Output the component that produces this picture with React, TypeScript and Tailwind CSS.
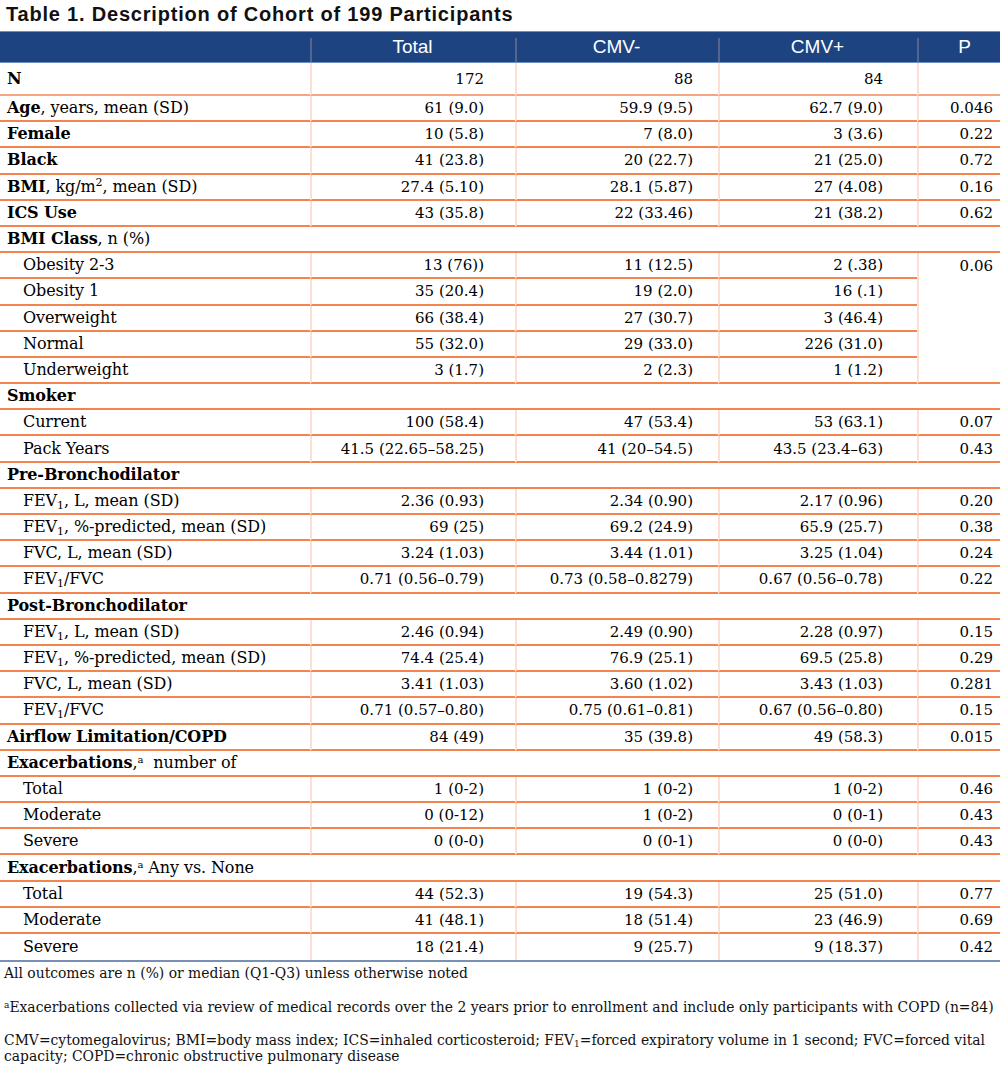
import React from "react";

type DataRow = {
  kind: "data";
  label: React.ReactNode;
  indent?: boolean;
  vals: [string, string, string];
  p?: string;
  pRowSpan?: number;
  skipP?: boolean;
  tall?: boolean;
  lightBorder?: boolean;
};
type SectionRow = { kind: "section"; label: React.ReactNode };
type Row = DataRow | SectionRow;

const Sub1 = () => <sub className="text-[11px]">1</sub>;
const SupA = () => <sup className="text-[10px]">a</sup>;

const rows: Row[] = [
  { kind: "data", label: <b>N</b>, vals: ["172", "88", "84"], p: "", tall: true, lightBorder: true },
  { kind: "data", label: <><b>Age</b>, years, mean (SD)</>, vals: ["61 (9.0)", "59.9 (9.5)", "62.7 (9.0)"], p: "0.046" },
  { kind: "data", label: <b>Female</b>, vals: ["10 (5.8)", "7 (8.0)", "3 (3.6)"], p: "0.22" },
  { kind: "data", label: <b>Black</b>, vals: ["41 (23.8)", "20 (22.7)", "21 (25.0)"], p: "0.72" },
  {
    kind: "data",
    label: <><b>BMI</b>, kg/m<sup className="text-[11px]">2</sup>, mean (SD)</>,
    vals: ["27.4 (5.10)", "28.1 (5.87)", "27 (4.08)"],
    p: "0.16",
  },
  { kind: "data", label: <b>ICS Use</b>, vals: ["43 (35.8)", "22 (33.46)", "21 (38.2)"], p: "0.62" },
  { kind: "section", label: <><b>BMI Class</b>, n (%)</> },
  { kind: "data", indent: true, label: "Obesity 2-3", vals: ["13 (76))", "11 (12.5)", "2 (.38)"], p: "0.06", pRowSpan: 5 },
  { kind: "data", indent: true, label: "Obesity 1", vals: ["35 (20.4)", "19 (2.0)", "16 (.1)"], skipP: true },
  { kind: "data", indent: true, label: "Overweight", vals: ["66 (38.4)", "27 (30.7)", "3 (46.4)"], skipP: true },
  { kind: "data", indent: true, label: "Normal", vals: ["55 (32.0)", "29 (33.0)", "226 (31.0)"], skipP: true },
  { kind: "data", indent: true, label: "Underweight", vals: ["3 (1.7)", "2 (2.3)", "1 (1.2)"], skipP: true },
  { kind: "section", label: <b>Smoker</b> },
  { kind: "data", indent: true, label: "Current", vals: ["100 (58.4)", "47 (53.4)", "53 (63.1)"], p: "0.07" },
  { kind: "data", indent: true, label: "Pack Years", vals: ["41.5 (22.65–58.25)", "41 (20–54.5)", "43.5 (23.4–63)"], p: "0.43" },
  { kind: "section", label: <b>Pre-Bronchodilator</b> },
  { kind: "data", indent: true, label: <>FEV<Sub1 />, L, mean (SD)</>, vals: ["2.36 (0.93)", "2.34 (0.90)", "2.17 (0.96)"], p: "0.20" },
  { kind: "data", indent: true, label: <>FEV<Sub1 />, %-predicted, mean (SD)</>, vals: ["69 (25)", "69.2 (24.9)", "65.9 (25.7)"], p: "0.38" },
  { kind: "data", indent: true, label: "FVC, L, mean (SD)", vals: ["3.24 (1.03)", "3.44 (1.01)", "3.25 (1.04)"], p: "0.24" },
  { kind: "data", indent: true, label: <>FEV<Sub1 />/FVC</>, vals: ["0.71 (0.56–0.79)", "0.73 (0.58–0.8279)", "0.67 (0.56–0.78)"], p: "0.22" },
  { kind: "section", label: <b>Post-Bronchodilator</b> },
  { kind: "data", indent: true, label: <>FEV<Sub1 />, L, mean (SD)</>, vals: ["2.46 (0.94)", "2.49 (0.90)", "2.28 (0.97)"], p: "0.15" },
  { kind: "data", indent: true, label: <>FEV<Sub1 />, %-predicted, mean (SD)</>, vals: ["74.4 (25.4)", "76.9 (25.1)", "69.5 (25.8)"], p: "0.29" },
  { kind: "data", indent: true, label: "FVC, L, mean (SD)", vals: ["3.41 (1.03)", "3.60 (1.02)", "3.43 (1.03)"], p: "0.281" },
  { kind: "data", indent: true, label: <>FEV<Sub1 />/FVC</>, vals: ["0.71 (0.57–0.80)", "0.75 (0.61–0.81)", "0.67 (0.56–0.80)"], p: "0.15" },
  { kind: "data", label: <b>Airflow Limitation/COPD</b>, vals: ["84 (49)", "35 (39.8)", "49 (58.3)"], p: "0.015" },
  { kind: "section", label: <><b>Exacerbations</b>,<SupA />{"\u00a0 "}number of</> },
  { kind: "data", indent: true, label: "Total", vals: ["1 (0-2)", "1 (0-2)", "1 (0-2)"], p: "0.46" },
  { kind: "data", indent: true, label: "Moderate", vals: ["0 (0-12)", "1 (0-2)", "0 (0-1)"], p: "0.43" },
  { kind: "data", indent: true, label: "Severe", vals: ["0 (0-0)", "0 (0-1)", "0 (0-0)"], p: "0.43" },
  { kind: "section", label: <><b>Exacerbations</b>,<SupA /> Any vs. None</> },
  { kind: "data", indent: true, label: "Total", vals: ["44 (52.3)", "19 (54.3)", "25 (51.0)"], p: "0.77" },
  { kind: "data", indent: true, label: "Moderate", vals: ["41 (48.1)", "18 (51.4)", "23 (46.9)"], p: "0.69" },
  { kind: "data", indent: true, label: "Severe", vals: ["18 (21.4)", "9 (25.7)", "9 (18.37)"], p: "0.42" },
];

const valPad = ["pr-[31px]", "pr-[25px]", "pr-[34px]"];

export default function App() {
  return (
    <div className="w-[1000px] bg-white text-black">
      <h1 className="h-[31px] pl-[6px] pt-[2px] text-[20px] leading-[24px] font-bold tracking-[0.8px] font-['Liberation_Sans',Arial,sans-serif] text-[#111]">
        Table 1. Description of Cohort of 199 Participants
      </h1>
      <table className="w-[1000px] table-fixed border-separate border-spacing-0">
        <colgroup>
          <col className="w-[310px]" />
          <col className="w-[205px]" />
          <col className="w-[203px]" />
          <col className="w-[199px]" />
          <col className="w-[83px]" />
        </colgroup>
        <thead>
          <tr className="font-['Liberation_Sans',Arial,sans-serif] text-[19px] font-normal text-white">
            <th className="h-[32px] p-0 bg-[#1d4481] border-t border-b border-[#6f8fc2]"></th>
            {["Total", "CMV-", "CMV+", "P"].map((h, i) => (
              <th
                key={h}
                className={`relative h-[32px] p-0 bg-[#1d4481] border-t border-b border-[#6f8fc2] font-normal text-center ${i === 3 ? "pl-[12px]" : ""}`}
              >
                <span className="absolute left-0 top-[6px] bottom-0 w-[2px] bg-[#55658e]" />
                {h}
              </th>
            ))}
          </tr>
        </thead>
        <tbody className="font-['DejaVu_Serif',serif]">
          {rows.map((r, idx) => {
            const last = idx === rows.length - 1;
            const bb = last ? "" : "border-b-2 border-b-[#f3844e]";
            if (r.kind === "section") {
              return (
                <tr key={idx}>
                  <td colSpan={5} className={`h-[26.2px] p-0 pl-[7px] text-[16px] leading-[20px] tracking-[-0.1px] ${bb}`}>
                    {r.label}
                  </td>
                </tr>
              );
            }
            const h = r.tall ? "h-[33px]" : "h-[26.2px]";
            const b = r.lightBorder ? "border-b-2 border-b-[#f6a582]" : bb;
            return (
              <tr key={idx}>
                <td className={`${h} p-0 ${r.indent ? "pl-[23px]" : "pl-[7px]"} text-[16px] leading-[20px] tracking-[-0.1px] whitespace-nowrap ${b}`}>
                  {r.label}
                </td>
                {r.vals.map((v, i) => (
                  <td
                    key={i}
                    className={`${h} p-0 ${valPad[i]} text-right text-[15px] leading-[20px] whitespace-nowrap border-l-2 border-l-[#fde0d3] ${b}`}
                  >
                    {v}
                  </td>
                ))}
                {!r.skipP && (
                  <td
                    rowSpan={r.pRowSpan}
                    className={`${h} p-0 pr-[7px] text-right text-[15px] leading-[20px] border-l-2 border-l-[#fde0d3] ${b} ${r.pRowSpan ? "align-top pt-[3px]" : ""}`}
                  >
                    {r.p}
                  </td>
                )}
              </tr>
            );
          })}
        </tbody>
      </table>
      <div className="h-[2px] w-[1000px] bg-[#7890b8]" />
      <div className="pl-[4px] font-['DejaVu_Serif',serif] text-[13.9px] leading-[16px] text-[#111]">
        <p className="pt-[3px]">All outcomes are n (%) or median (Q1-Q3) unless otherwise noted</p>
        <p className="pt-[18px] whitespace-nowrap">
          <sup className="text-[9px]">a</sup>Exacerbations collected via review of medical records over the 2 years prior to enrollment and include only participants with COPD (n=84)
        </p>
        <p className="pt-[17px] whitespace-nowrap">
          CMV=cytomegalovirus; BMI=body mass index; ICS=inhaled corticosteroid; FEV<sub className="text-[9px]">1</sub>=forced expiratory volume in 1 second; FVC=forced vital
          <br />
          capacity; COPD=chronic obstructive pulmonary disease
        </p>
      </div>
    </div>
  );
}
